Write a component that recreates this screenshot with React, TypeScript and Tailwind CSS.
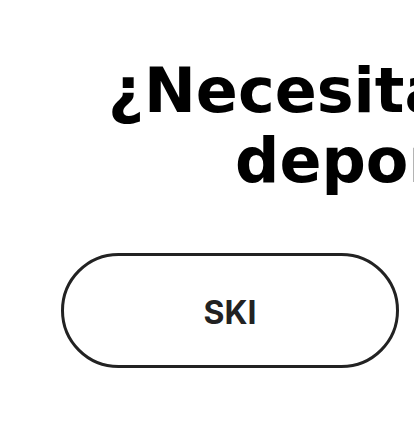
export default function App() {
  return (
    <div className="w-[414px] h-[448px] overflow-hidden bg-white">
      {/* Heading, wider than the viewport */}
      <h1
        className="pt-[56px] text-[62px] leading-[70px] font-bold text-black whitespace-nowrap"
        style={{ fontFamily: '"DejaVu Sans", sans-serif' }}
      >
        <span className="block ml-[108px]">¿Necesitas material</span>
        <span className="block ml-[235px]">deportivo?</span>
      </h1>

      {/* Sport button */}
      <div className="mt-[57px] ml-[61px]">
        <button
          className="w-[338px] h-[115px] rounded-full border-[3px] border-[#222] flex items-center justify-center pt-[5px] text-[32px] font-bold text-[#222]"
          style={{ fontFamily: 'Inter, sans-serif' }}
        >
          SKI
        </button>
      </div>
    </div>
  );
}
